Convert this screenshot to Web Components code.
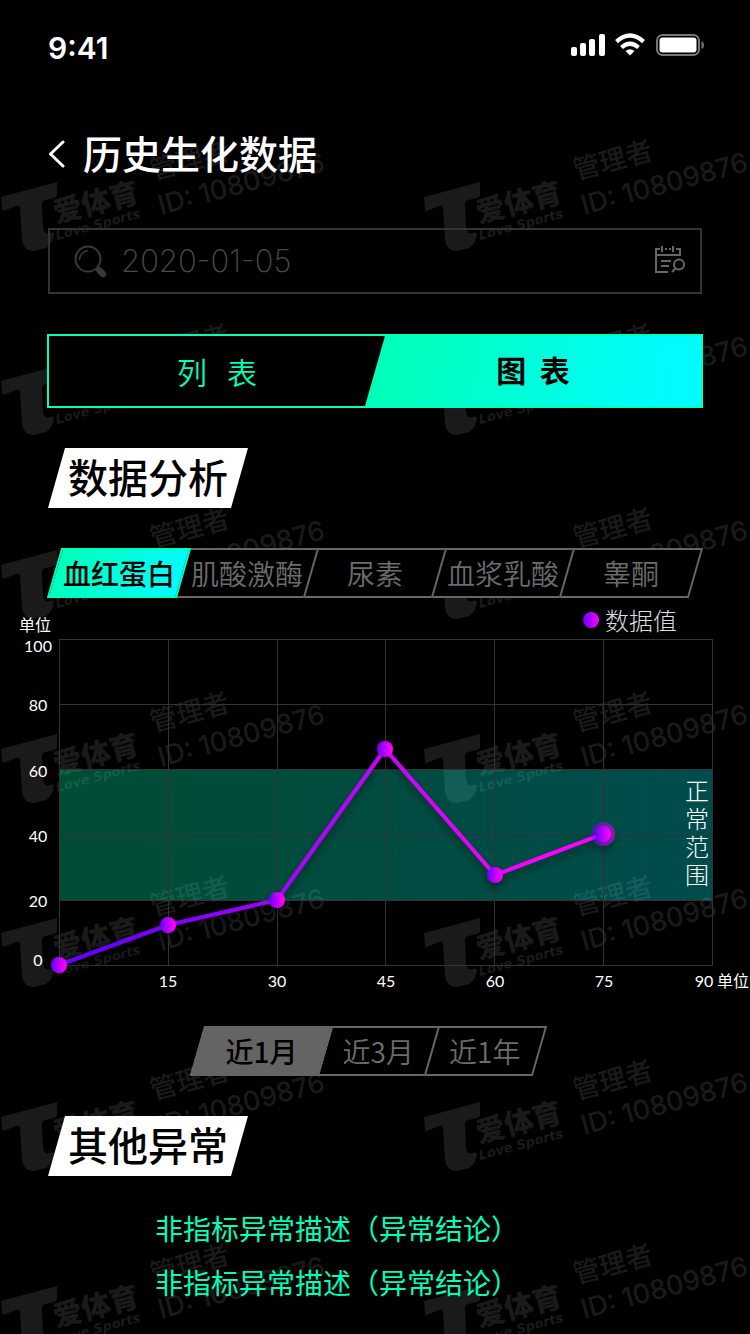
<!DOCTYPE html>
<html lang="zh-CN">
<head>
<meta charset="utf-8">
<meta name="viewport" content="width=device-width">
<title>历史生化数据</title>
<style>
  body { margin: 0; background: #000; color: #fff; font-family: "Noto Sans CJK SC", sans-serif; }
</style>
</head>
<body>
<history-page></history-page>
<script>
  function define(name, html, setup) {
    const template = document.createElement('template');
    template.innerHTML = html;
    customElements.define(name, class extends HTMLElement {
      constructor() {
        super();
        this.attachShadow({ mode: 'open' }).append(template.content.cloneNode(true));
      }
      connectedCallback() { if (setup) setup(this, this.shadowRoot); }
    });
  }

  define('water-mark', `
    <style>
      :host { display: block; }
      svg { display: block; width: 424px; height: 184px; fill: #1a1a1a; }
    </style>
    <svg viewBox="0 0 424 184">
      <path d="M1 77 L57 62 V74 Q57 77 54 78 L45 80 Q42 81 42 84 L43 107 Q44 115 49 113 Q52 112 54 113 Q54 122 46 128 L34 131 Q24 132 22 120 L20 88 Q20 85 16 86 L4 91 Q2 91 2 88Z"/>
      <text transform="translate(56 103) rotate(-14)" font-size="29" font-weight="900">爱体育</text>
      <text transform="translate(57 120) rotate(-15)" font-family="DejaVu Sans" font-size="13" font-weight="700" font-style="oblique">Love Sports</text>
      <text transform="translate(153 60) rotate(-15)" font-size="27" font-weight="500">管理者</text>
      <text transform="translate(161 95) rotate(-15)" font-family="Inter" font-size="27" font-weight="500">ID: 10809876</text>
    </svg>`);

  define('status-bar', `
    <style>
      :host { display: flex; align-items: center; justify-content: space-between; height: 96px; padding: 0 46px 0 48px;
        font: 600 30px/36px Inter, sans-serif; }
      svg { display: block; width: 134px; height: 24px; margin-top: -6px; }
    </style>
    <span>9:41</span>
    <svg viewBox="0 0 134 24" fill="#fff" aria-hidden="true">
      <rect x="1" y="14" width="6" height="9" rx="2"/><rect x="10" y="10" width="6" height="13" rx="2"/>
      <rect x="19" y="6" width="6" height="17" rx="2"/><rect x="29" y="1" width="6" height="22" rx="2"/>
      <g fill="none" stroke="#fff" stroke-width="4.200"><path d="M46.500 8.600 Q60 -3.500 73.500 8.600"/><path d="M51.500 14.500 Q60 7 68.500 14.500"/></g>
      <path d="M55.500 18 Q60 14.500 64.500 18 L60 22.500Z"/>
      <rect x="87" y="2" width="42" height="20" rx="5.500" fill="none" stroke="#767676" stroke-width="2"/>
      <rect x="89.500" y="4.500" width="37" height="15" rx="3"/><path d="M131.500 8 Q134 9 134 12 Q134 15 131.500 16Z" fill="#767676"/>
    </svg>`);

  define('page-title', `
    <style>
      :host { display: flex; align-items: center; gap: 18px; padding: 0 48px; }
      button { all: unset; width: 17px; height: 28px; }
      svg { display: block; }
      h1 { margin: 0; padding-bottom: 4px; font-size: 39px; line-height: 54px; font-weight: 500; }
    </style>
    <button type="button" aria-label="返回"><svg width="17" height="28" viewBox="0 0 17 28" fill="none" stroke="#fff" stroke-width="3" stroke-linecap="round" stroke-linejoin="round"><path d="M15 2 L2.500 14 L15 26"/></svg></button>
    <h1><slot></slot></h1>`);

  define('date-search', `
    <style>
      :host { display: flex; align-items: center; box-sizing: border-box; height: 66px; margin: 45px 48px 0;
        padding: 0 14px 0 24px; border: 2px solid #333; }
      svg { display: block; flex: none; }
      input { all: unset; flex: 1; min-width: 0; margin-left: 14px; font: 200 31px/40px Inter, sans-serif; color: #4a4a4a; }
      button { all: unset; }
    </style>
    <svg width="33" height="33" viewBox="0 0 33 33" fill="none" stroke="#383838"><circle cx="14" cy="14" r="12.500" stroke-width="2"/><path d="M5.500 15 Q6 7 14 5.500" stroke-width="1.500"/><path d="M22 23 L24 25" stroke-width="3"/><path d="M25.500 25.500 L29 29" stroke-width="6.500" stroke-linecap="round"/></svg>
    <input type="text" value="2020-01-05" aria-label="日期">
    <button type="button" aria-label="选择日期"><svg width="32" height="30" viewBox="0 0 32 30" fill="none" stroke="#666" stroke-width="2"><path d="M6 3 H2 V26 H14 M2 9 H26 V3 H22 M11 3 H13 M15 3 H17 M8 0 V6 M19 0 V6 M7 15 H17 M7 20 H15"/><circle cx="25" cy="18.500" r="5"/><path d="M21.500 22.500 L18 26"/></svg></button>`);

  define('view-switch', `
    <style>
      :host { display: flex; box-sizing: border-box; height: 74px; margin: 40px 47px 0; border: 2px solid #00ffba; background: #000; }
      button { all: unset; box-sizing: border-box; text-align: center; white-space: pre; font-size: 30px; }
      .list { flex: 337; color: #00ffba; font-weight: 350; }
      .chart { flex: 337; margin-left: -20px; padding-bottom: 4px; color: #000; font-weight: 700;
        background: linear-gradient(100deg, #00ffb9 10%, #00fcff 90%); clip-path: polygon(20px 0, 100% 0, 100% 100%, 0 100%); }
    </style>
    <button class="list" type="button">列   表</button>
    <button class="chart" type="button">图  表</button>`);

  define('section-title', `
    <style>
      :host { display: block; width: max-content; margin-left: 48px; padding: 0 20px 4px; background: #fff; color: #000;
        clip-path: polygon(17px 0, 100% 0, calc(100% - 17px) 100%, 0 100%); }
      h2 { margin: 0; font-size: 40px; line-height: 56px; font-weight: 500; }
    </style>
    <h2><slot></slot></h2>`);

  define('slant-tab', `
    <style>
      :host { display: block; flex: 1; }
      button { all: unset; display: block; box-sizing: border-box; position: relative; z-index: 0; width: 100%; height: 50px;
        text-align: center; white-space: nowrap; font-size: 28px; line-height: 50px; font-weight: 350; color: #6c6c6c; }
      button::before { content: ""; position: absolute; z-index: -1; inset: 0 -1px; border: 2px solid #666; background: #000; transform: skewX(-16deg); }
      :host([active]) { position: relative; z-index: 1; }
      :host([active]) button { color: #000; font-weight: 500; }
      :host([active]) button::before { border-color: var(--edge, #00ffba); background: var(--fill, linear-gradient(100deg, #00ffb9, #00fcff)); }
    </style>
    <button type="button"><slot></slot></button>`);

  define('tab-row', `
    <style>:host { display: flex; }</style><slot></slot>`);

  define('trend-chart', `
    <style>
      :host { display: block; }
      header { display: flex; justify-content: space-between; height: 40px; padding: 0 73px 0 19px; }
      .unit { font-size: 16px; line-height: 24px; margin-top: 14px; }
      .legend { display: flex; align-items: center; gap: 6px; padding-top: 4px; font-size: 24px; line-height: 36px; font-weight: 300; color: #ddd; }
      .legend i { width: 16px; height: 16px; border-radius: 50%; background: linear-gradient(90deg, #6600ff, #ff00ff); }
      svg { display: block; width: 100%; }
      .num { font: 16px Lato, sans-serif; }
      .range { width: 24px; font-size: 24px; line-height: 28px; font-weight: 300; word-break: break-all; }
    </style>
    <header><span class="unit">单位</span><span class="legend"><i></i>数据值</span></header>
    <svg viewBox="0 638 750 362" fill="#fff" role="img" aria-label="数据值折线图">
      <defs>
        <linearGradient id="band"><stop stop-color="#00ffb0"/><stop offset="1" stop-color="#00fcff"/></linearGradient>
        <linearGradient id="line" gradientUnits="userSpaceOnUse" x1="100" y1="0" x2="540" y2="0"><stop stop-color="#6600ff"/><stop offset="1" stop-color="#ff00ff"/></linearGradient>
        <linearGradient id="dot"><stop stop-color="#6600ff"/><stop offset=".9" stop-color="#ff00ff"/></linearGradient>
        <filter id="shade" filterUnits="userSpaceOnUse" x="30" y="720" width="620" height="270"><feDropShadow dx="0" dy="5" stdDeviation="4" flood-color="#000" flood-opacity=".5"/></filter>
      </defs>
      <rect x="59" y="769" width="654" height="131" fill="url(#band)" opacity=".3"/>
      <g class="grid" fill="none" stroke="#333" stroke-width="1"></g>
      <g filter="url(#shade)"><path class="curve" fill="none" stroke="url(#line)" stroke-width="4"/><g class="dots" fill="url(#dot)"></g></g>
      <g class="labels num" text-anchor="middle"></g>
      <text x="717" y="987" font-size="16">单位</text>
      <foreignObject x="685" y="776" width="24" height="116"><div class="range">正常范围</div></foreignObject>
    </svg>`, (host, root) => {
    const points = [[59, 965], [168, 925], [277, 900], [385, 749], [495, 875], [603, 834]];
    const columns = [59.5, 168.5, 277.5, 385.5, 494.5, 603.5, 712.5];
    const rows = [639.5, 704.5, 769.5, 835.5, 900.5, 965.5];
    root.querySelector('.grid').innerHTML = '<path d="' +
      columns.map(x => `M${x} 639V966`).join('') + rows.map(y => `M59 ${y}H713`).join('') + '"/>';
    root.querySelector('.curve').setAttribute('d', 'M' + points.join('L'));
    root.querySelector('.dots').innerHTML = '<circle cx="603" cy="834" r="12" opacity=".45"/>' +
      points.map(([x, y]) => `<circle cx="${x}" cy="${y}" r="8"/>`).join('');
    const labels = [['100', 38, 652], ['80', 38, 711], ['60', 38, 777], ['40', 38, 842], ['20', 38, 907], ['0', 38, 966],
      ['15', 168, 987], ['30', 277, 987], ['45', 386, 987], ['60', 495, 987], ['75', 604, 987], ['90', 704, 987]];
    root.querySelector('.labels').innerHTML = labels.map(([t, x, y]) => `<text x="${x}" y="${y}">${t}</text>`).join('');
  });

  define('finding-list', `
    <style>
      :host { display: block; }
      ul { list-style: none; margin: 25px 48px 0 155px; padding: 0; color: #00ffba; font-size: 28px; line-height: 54px; }
    </style>
    <ul><li>非指标异常描述（异常结论）</li><li>非指标异常描述（异常结论）</li></ul>`);

  define('history-page', `
    <style>
      :host { display: block; position: relative; isolation: isolate; overflow: hidden; min-height: 100vh; }
      .marks { position: absolute; z-index: -1; inset: 0; overflow: hidden; display: grid; align-content: start;
        grid-template-columns: 423px 423px; padding-top: 120px; }
      page-title { margin-top: 29px; }
      .first { margin-top: 40px; }
      .metrics { margin: 40px 55px 0; }
      .periods { width: 340px; margin: 26px auto 0; padding-right: 14px; --edge: #646464; --fill: #646464; }
      .periods slant-tab:first-child { flex: none; width: 127px; }
      .second { margin-top: 40px; }
    </style>
    <div class="marks" aria-hidden="true"></div>
    <status-bar></status-bar>
    <page-title>历史生化数据</page-title>
    <date-search></date-search>
    <view-switch></view-switch>
    <section-title class="first">数据分析</section-title>
    <tab-row class="metrics">
      <slant-tab active>血红蛋白</slant-tab><slant-tab>肌酸激酶</slant-tab><slant-tab>尿素</slant-tab><slant-tab>血浆乳酸</slant-tab><slant-tab>睾酮</slant-tab>
    </tab-row>
    <trend-chart></trend-chart>
    <tab-row class="periods">
      <slant-tab active>近1月</slant-tab><slant-tab>近3月</slant-tab><slant-tab>近1年</slant-tab>
    </tab-row>
    <section-title class="second">其他异常</section-title>
    <finding-list></finding-list>`, (host, root) => {
    root.querySelector('.marks').innerHTML = '<water-mark></water-mark>'.repeat(14);
  });
</script>
</body>
</html>
